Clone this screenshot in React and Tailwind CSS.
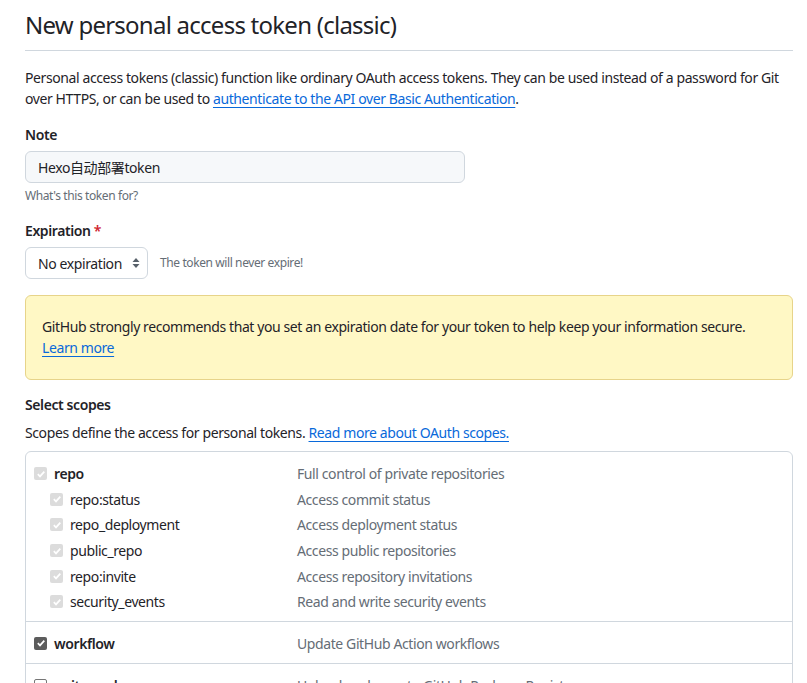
import React from "react";

const font = { fontFamily: '"Segoe UI", "Noto Sans", "Noto Sans CJK SC", sans-serif' };

function Check({ state }) {
  // state: "disabled" | "checked" | "empty"
  if (state === "empty") {
    return <span className="inline-block w-[13px] h-[13px] rounded-[2px] border border-[#767676] bg-white shrink-0" />;
  }
  const bg = state === "checked" ? "bg-[#5c5c5c]" : "bg-[#dcdcdc]";
  return (
    <span className={`inline-flex items-center justify-center w-[13px] h-[13px] rounded-[2px] ${bg} shrink-0`}>
      <svg width="10" height="10" viewBox="0 0 10 10">
        <path d="M1.8 5.2 L4 7.4 L8.3 2.6" fill="none" stroke="#fff" strokeWidth="1.7" />
      </svg>
    </span>
  );
}

function ScopeRow({ name, desc, state, sub, bold }) {
  return (
    <div className="flex items-center h-[25.6px]">
      <div className={`flex items-center w-[271px] ${sub ? "pl-[24px]" : "pl-[8px]"}`}>
        <Check state={state} />
        <span className={`ml-[7px] text-[14px] text-[#1f2328] ${bold ? "font-semibold" : ""}`}>{name}</span>
      </div>
      <span className="text-[14px] text-[#656d76]">{desc}</span>
    </div>
  );
}

export default function App() {
  return (
    <div className="bg-white min-h-screen pl-[25px] pr-[14px] text-[#1f2328] tracking-[-0.4px]" style={font}>
      <div className="pt-[8px] pb-[8px] border-b border-[#d0d7de]">
        <h1 className="text-[24px] leading-[34px] font-normal tracking-[-0.75px]">New personal access token (classic)</h1>
      </div>

      <p className="mt-[16px] text-[14px] leading-[21px]">
        Personal access tokens (classic) function like ordinary OAuth access tokens. They can be used instead of a password for Git
        over HTTPS, or can be used to{" "}
        <a className="text-[#0969da] underline underline-offset-[3px]">authenticate to the API over Basic Authentication</a>.
      </p>

      <div className="mt-[15px]">
        <div className="text-[14px] font-semibold leading-[21px]">Note</div>
        <div className="mt-[6px] w-[440px] h-[32px] rounded-[6px] border border-[#d0d7de] bg-[#f6f8fa] flex items-center px-[12px] text-[14px]">
          Hexo自动部署token
        </div>
        <div className="mt-[5px] text-[12px] leading-[16px] text-[#656d76]">What's this token for?</div>
      </div>

      <div className="mt-[16px]">
        <div className="text-[14px] font-semibold leading-[21px]">
          Expiration <span className="text-[#cf222e]">*</span>
        </div>
        <div className="mt-[6px] flex items-center">
          <div className="w-[123px] h-[32px] rounded-[6px] border border-[#d0d7de] bg-white flex items-center justify-between pl-[12px] pr-[6px] text-[14px]">
            <span>No expiration</span>
            <svg width="10" height="14" viewBox="0 0 10 14">
              <path d="M5 2 L8.5 6 L1.5 6 Z M5 12 L8.5 8 L1.5 8 Z" fill="#57606a" />
            </svg>
          </div>
          <span className="ml-[12px] text-[12px] text-[#656d76]">The token will never expire!</span>
        </div>
      </div>

      <div className="mt-[16px] rounded-[6px] border border-[#e7d48a] bg-[#fff8c5] px-[16px] pt-[20px] pb-[21px] text-[14px] leading-[21px]">
        GitHub strongly recommends that you set an expiration date for your token to help keep your information secure.
        <br />
        <a className="text-[#0969da] underline underline-offset-[3px]">Learn more</a>
      </div>

      <div className="mt-[14px] text-[14px] font-semibold leading-[21px]">Select scopes</div>
      <p className="mt-[7px] text-[14px] leading-[21px]">
        Scopes define the access for personal tokens.{" "}
        <a className="text-[#0969da] underline underline-offset-[3px]">Read more about OAuth scopes.</a>
      </p>

      <div className="mt-[8px] rounded-t-[6px] border border-[#d0d7de]">
        <div className="pt-[9px] pb-[6px]">
          <ScopeRow name="repo" desc="Full control of private repositories" state="disabled" bold />
          <ScopeRow name="repo:status" desc="Access commit status" state="disabled" sub />
          <ScopeRow name="repo_deployment" desc="Access deployment status" state="disabled" sub />
          <ScopeRow name="public_repo" desc="Access public repositories" state="disabled" sub />
          <ScopeRow name="repo:invite" desc="Access repository invitations" state="disabled" sub />
          <ScopeRow name="security_events" desc="Read and write security events" state="disabled" sub />
        </div>
        <div className="border-t border-[#d0d7de] pt-[9px] pb-[7px]">
          <ScopeRow name="workflow" desc="Update GitHub Action workflows" state="checked" bold />
        </div>
        <div className="border-t border-[#d0d7de] pt-[9px] pb-[7px]">
          <ScopeRow name="write:packages" desc="Upload packages to GitHub Package Registry" state="empty" bold />
        </div>
      </div>
    </div>
  );
}
